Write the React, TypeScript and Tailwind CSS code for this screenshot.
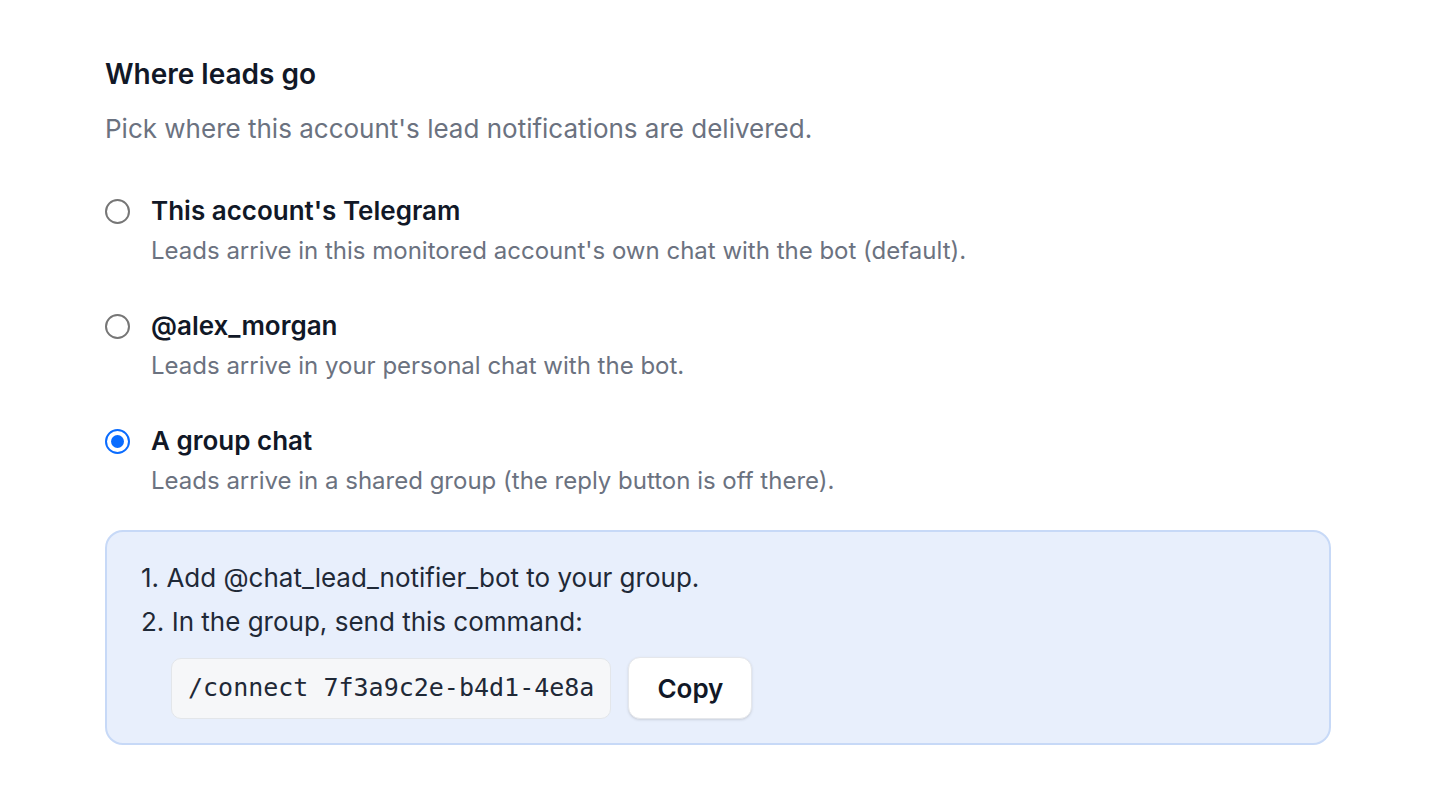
export default function App() {
  const options = [
    {
      title: "This account's Telegram",
      desc: "Leads arrive in this monitored account's own chat with the bot (default).",
      checked: false,
    },
    {
      title: "@alex_morgan",
      desc: "Leads arrive in your personal chat with the bot.",
      checked: false,
    },
    {
      title: "A group chat",
      desc: "Leads arrive in a shared group (the reply button is off there).",
      checked: true,
    },
  ];

  return (
    <div className="min-h-screen w-full bg-white font-['Inter',sans-serif] text-[#111827]">
      <div className="pl-[105px] pr-[105px] pt-[56px]">
        <h2 className="text-[28px] font-semibold leading-[36px]">Where leads go</h2>
        <p className="mt-[19px] text-[26px] leading-[36px] text-[#6b7280]">
          Pick where this account's lead notifications are delivered.
        </p>

        <div className="mt-[46px] flex flex-col gap-[41px]">
          {options.map((o) => (
            <label key={o.title} className="flex items-start gap-[21px]">
              <span
                className={
                  o.checked
                    ? "mt-[6px] flex h-[25px] w-[25px] shrink-0 items-center justify-center rounded-full border-[2px] border-[#0a6cff] bg-white"
                    : "mt-[6px] flex h-[25px] w-[25px] shrink-0 items-center justify-center rounded-full border-[2px] border-[#767676] bg-white"
                }
              >
                {o.checked && <span className="h-[13px] w-[13px] rounded-full bg-[#0a6cff]" />}
              </span>
              <span className="flex flex-col">
                <span className="text-[26px] font-semibold leading-[36px]">{o.title}</span>
                <span className="mt-[6px] text-[24px] leading-[32px] text-[#6b7280]">{o.desc}</span>
              </span>
            </label>
          ))}
        </div>

        <div className="mt-[33px] rounded-[18px] border-[2px] border-[#c7d9f7] bg-[#e8effc] pl-[34px] pr-[34px] pt-[29px] pb-[24px]">
          <ol className="flex flex-col gap-[10px] text-[26px] leading-[34px] text-[#1f2937]">
            <li>1. Add @chat_lead_notifier_bot to your group.</li>
            <li>2. In the group, send this command:</li>
          </ol>
          <div className="mt-[18px] flex items-center gap-[17px] pl-[30px]">
            <div className="flex h-[61px] items-center whitespace-nowrap rounded-[10px] border border-[#e3e6ea] bg-[#f6f7f9] px-[16px] font-['DejaVu_Sans_Mono',monospace] text-[25px] text-[#1f2937]">
              /connect 7f3a9c2e-b4d1-4e8a
            </div>
            <button
              type="button"
              className="h-[62px] rounded-[12px] border border-[#e5e7eb] bg-white px-[28px] text-[26px] font-semibold text-[#111827] shadow-sm"
            >
              Copy
            </button>
          </div>
        </div>
      </div>
    </div>
  );
}
